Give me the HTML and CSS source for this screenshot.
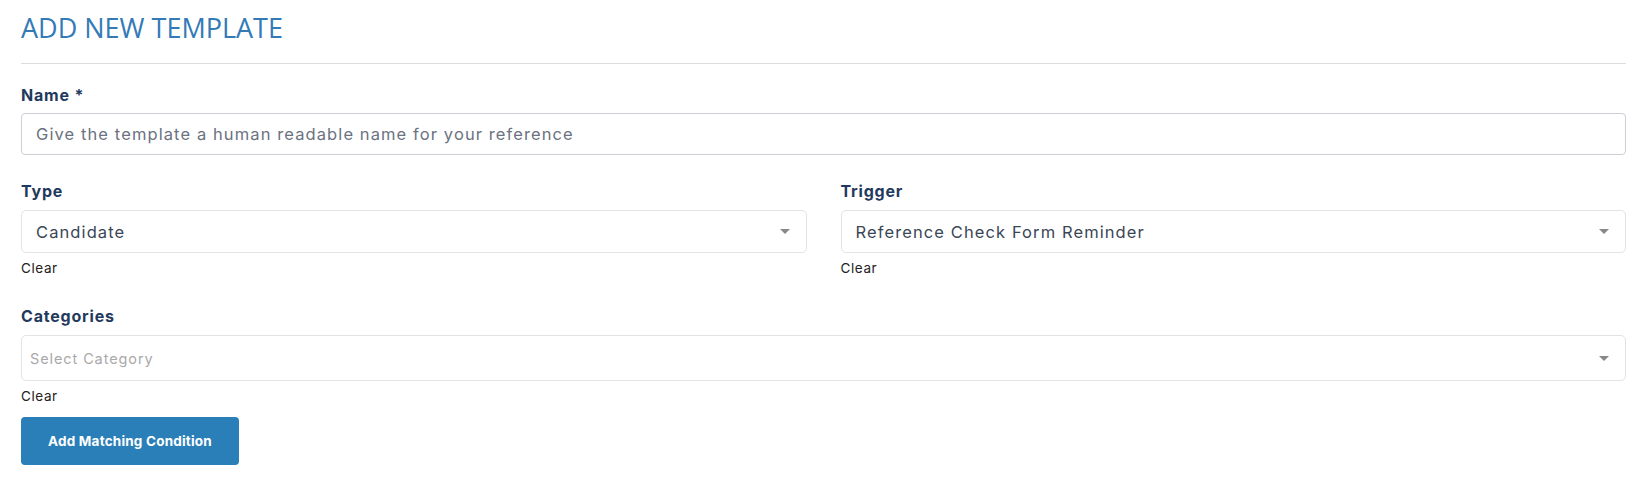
FILE: index.html
```html
<!DOCTYPE html>
<html lang="en">
<head>
    <meta charset="UTF-8">
    <meta name="viewport" content="width=device-width, initial-scale=1.0">
    <title>Add New Template</title>
    <link rel="stylesheet" href="styles.css">
</head>
<body>
    <div class="page">
        <h1 class="page-title">ADD NEW TEMPLATE</h1>
        <hr class="divider">

        <!-- Name -->
        <div class="field">
            <label class="field-label" for="templateName">Name *</label>
            <input type="text" id="templateName" class="text-input" placeholder="Give the template a human readable name for your reference">
        </div>

        <!-- Type / Trigger -->
        <div class="row">
            <div class="field">
                <label class="field-label">Type</label>
                <div class="select">
                    <span class="select-value">Candidate</span>
                    <span class="select-arrow"></span>
                </div>
                <a class="clear-link">Clear</a>
            </div>
            <div class="field">
                <label class="field-label">Trigger</label>
                <div class="select">
                    <span class="select-value">Reference Check Form Reminder</span>
                    <span class="select-arrow"></span>
                </div>
                <a class="clear-link">Clear</a>
            </div>
        </div>

        <!-- Categories -->
        <div class="field field-categories">
            <label class="field-label">Categories</label>
            <div class="select select-lg">
                <span class="select-placeholder">Select Category</span>
                <span class="select-arrow"></span>
            </div>
            <a class="clear-link">Clear</a>
        </div>

        <button class="btn-primary">Add Matching Condition</button>
    </div>
</body>
</html>
```

FILE: styles.css
```css
body { margin: 0; background: #fff; font-family: "Inter", "Noto Sans", sans-serif; }
.page { padding: 10px 18px 0 21px; }

.page-title { margin: 0; font-family: "Open Sans", sans-serif; font-weight: 400; font-size: 27px; line-height: 36px; color: #337ab7; }
.divider { margin: 17px 0 0; border: 0; border-top: 1px solid #dcdcdc; }

.field { display: flex; flex-direction: column; }
.field-label { margin-top: 19px; font-size: 16px; line-height: 24px; font-weight: 700; color: #1f3a5c; letter-spacing: 0.8px; }

.text-input { margin-top: 6px; height: 42px; box-sizing: border-box; padding: 0 14px; border: 1px solid #ccd0d6; border-radius: 4px; font-family: inherit; font-size: 16.5px; letter-spacing: 1.1px; color: #333; outline: none; }
.text-input::placeholder { color: #6b7280; }

.row { display: grid; grid-template-columns: 1fr 1fr; gap: 34px; margin-top: 24px; }
.row .field-label { margin-top: 0; }

.select { margin-top: 7px; height: 43px; box-sizing: border-box; display: flex; align-items: center; justify-content: space-between; padding: 0 16px 0 14px; border: 1px solid #e3e3e3; border-radius: 5px; }
.select-lg { height: 46px; padding-left: 8px; }
.select-value { font-size: 16.5px; letter-spacing: 1.1px; color: #3a4656; }
.select-placeholder { font-size: 14.5px; letter-spacing: 0.9px; color: #a9a9a9; }
.select-arrow { width: 0; height: 0; border-left: 5px solid transparent; border-right: 5px solid transparent; border-top: 5px solid #888; }

.clear-link { margin-top: 7px; font-size: 13.5px; line-height: 16px; color: #222; letter-spacing: 0.6px; }

.field-categories .field-label { margin-top: 28px; }

.btn-primary { margin-top: 13px; width: 218px; height: 48px; border: 0; border-radius: 4px; background: #2a7fb8; color: #fff; font-family: inherit; font-size: 13.5px; font-weight: 700; letter-spacing: 0.2px; cursor: pointer; }
```
